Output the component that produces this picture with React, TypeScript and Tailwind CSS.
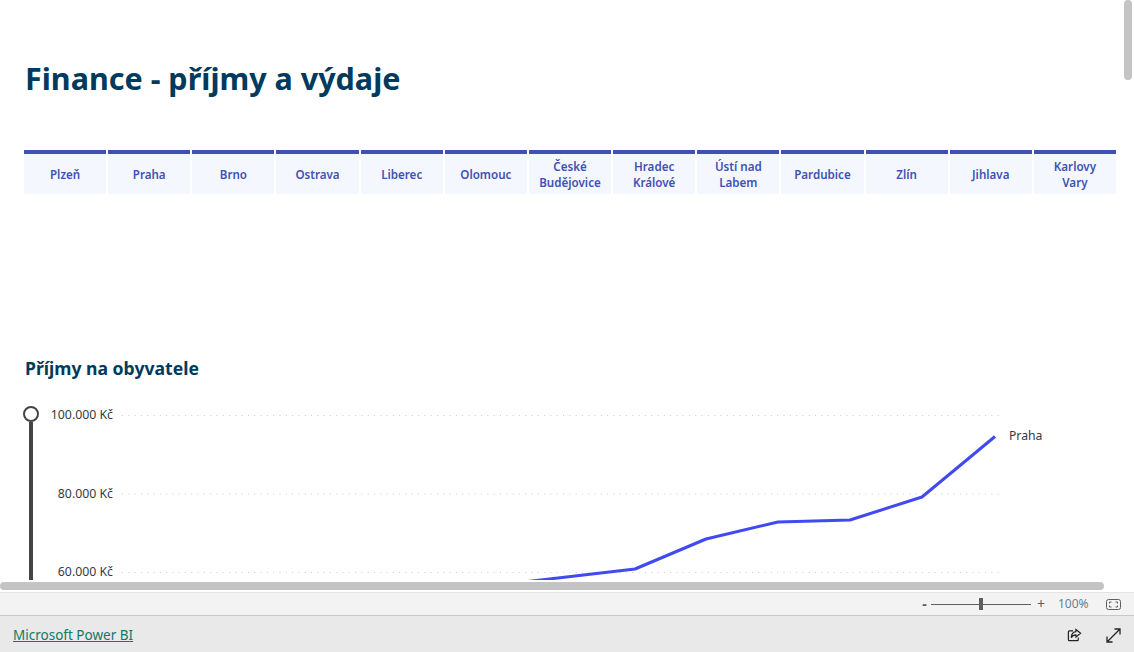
import React from "react";

const cities = [
  "Plzeň", "Praha", "Brno", "Ostrava", "Liberec", "Olomouc", "České Budějovice",
  "Hradec Králové", "Ústí nad Labem", "Pardubice", "Zlín", "Jihlava", "Karlovy Vary",
];

const axisLabels = ["100.000 Kč", "80.000 Kč", "60.000 Kč"];

// chart coordinates start at x=0, y=400 of the page
const linePoints = "515,183 635,169 706,139 778,122 850,120 922,97 995,36.5";

const App: React.FC = () => {
  return (
    <div className="relative flex h-[652px] w-[1134px] flex-col overflow-hidden bg-white font-['Noto_Sans','Open_Sans',sans-serif]">
      {/* report page */}
      <div className="h-[580px] shrink-0 overflow-hidden">
        <h1 className="ml-[25px] mt-[56px] h-[44px] text-[30.5px] font-bold leading-[44px] text-[#003a5d]">
          Finance - příjmy a výdaje
        </h1>

        <div className="ml-6 mt-[50px] grid w-[1092px] grid-cols-13 gap-x-[2px]">
          {cities.map((city) => (
            <div
              key={city}
              className="flex h-[44px] items-center justify-center border-t-4 border-[#3f51b5] bg-[#f5f7ff] px-2 pt-[1px] text-center text-[11.6px] font-semibold leading-[16px] text-[#3f51b5]"
            >
              {city}
            </div>
          ))}
        </div>

        <h2 className="ml-[25px] mt-[160px] h-[28px] text-[17.6px] font-bold leading-[28px] text-[#003a5d]">
          Příjmy na obyvatele
        </h2>

        <div className="relative ml-[23px] mt-[24px] flex">
          <div className="flex flex-col items-center">
            <div className="h-[16px] w-[16px] rounded-full border-2 border-[#444444] bg-white" />
            <div className="h-[170px] w-[4px] bg-[#444444]" />
          </div>
          <div className="ml-[8px] flex w-[66px] flex-col items-end">
            {axisLabels.map((label) => (
              <div key={label} className="h-[78.5px] whitespace-nowrap text-[12.3px] leading-[18px] text-[#333a45]">
                {label}
              </div>
            ))}
          </div>
          <div className="absolute left-[986px] top-[21px] text-[12.2px] leading-[18px] text-[#333a45]">Praha</div>
          <svg className="absolute left-[-23px] top-[-6px]" width="1134" height="200" viewBox="0 0 1134 200">
            {[15.5, 94, 172.5].map((y) => (
              <line key={y} x1="122" x2="1000" y1={y} y2={y} stroke="#cccccc" strokeDasharray="1 5.3" />
            ))}
            <polyline points={linePoints} fill="none" stroke="#4149f0" strokeWidth="3" strokeLinejoin="round" />
          </svg>
        </div>
      </div>

      <div className="h-[12px] shrink-0" />

      {/* zoom bar */}
      <div className="flex h-[23px] shrink-0 items-center border-t border-[#e3e3e3] bg-[#f3f3f3] text-[#605e5c]">
        <div className="ml-[921px] w-[7px] text-center text-[14px] font-bold leading-[20px]">-</div>
        <div className="relative ml-[3px] h-[1px] w-[100px] bg-[#605e5c]">
          <div className="absolute left-[48px] top-[-6px] h-[12px] w-[4px] bg-[#605e5c]" />
        </div>
        <div className="ml-[5px] w-[10px] text-center text-[14px] leading-[20px]">+</div>
        <div className="ml-[12px] w-[30px] text-[12px] leading-[16px] text-[#6b7f95]">100%</div>
        <svg className="ml-[18px]" width="15" height="11" viewBox="0 0 15 11" fill="none" stroke="#605e5c">
          <rect x="0.5" y="0.5" width="14" height="10" rx="2" />
          <path d="M3.5 4.5V3H5.5M9.5 3H11.5V4.5M11.5 6.5V8H9.5M5.5 8H3.5V6.5" />
        </svg>
      </div>

      {/* footer */}
      <div className="flex h-[37px] shrink-0 items-center border-t border-[#c8c8c8] bg-[#e9e9e9] pr-[13px]">
        <a href="#" className="ml-[13px] pt-[2px] text-[13.5px] leading-[20px] text-[#117865] underline">
          Microsoft Power BI
        </a>
        <svg className="ml-auto mt-[2px]" width="15" height="15" viewBox="0 0 16 16" fill="none" stroke="#252423" strokeWidth="1.3">
          <path d="M6.5 3H2.5A1 1 0 0 0 1.5 4V12.5A1 1 0 0 0 2.5 13.5H11A1 1 0 0 0 12 12.5V10" />
          <path d="M9.5 1.5L14.5 5.5L9.5 9.5V7.3C7 7.3 5.5 8.3 4.5 10.5C4.5 7 6.5 4.3 9.5 3.8Z" />
        </svg>
        <svg className="ml-[24px] mt-[2px]" width="15" height="15" viewBox="0 0 15 15" fill="none" stroke="#252423" strokeWidth="1.3">
          <path d="M1 14L14 1M8.5 1H14V6.5M1 8.5V14H6.5" />
        </svg>
      </div>

      {/* overlay scrollbars */}
      <div className="absolute left-[1124px] top-0 h-[80px] w-[8px] rounded-full bg-[#c4c4c4]" />
      <div className="absolute left-0 top-[582px] h-[8px] w-[1104px] rounded-full bg-[#c4c4c4]" />
    </div>
  );
};

export default App;
